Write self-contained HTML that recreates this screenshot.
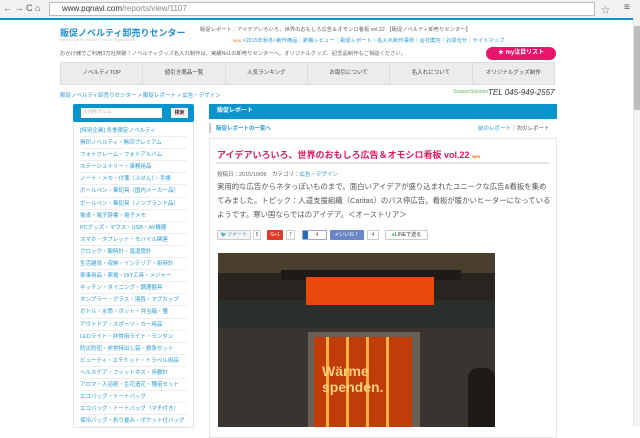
<!DOCTYPE html>
<html><head><meta charset="utf-8"><style>
*{margin:0;padding:0;box-sizing:border-box}
body{width:640px;height:427px;overflow:hidden;background:#fff;font-family:"Liberation Sans","Noto Sans CJK JP",sans-serif;position:relative;color:#555}
.a{position:absolute;white-space:nowrap}
.chrome{left:0;top:0;width:640px;height:18px;background:#f2f2f2}
.url{left:49px;top:2px;width:546px;height:14px;background:#fff;border:1px solid #bbb;font-size:8px;line-height:12px;padding-left:12px;color:#333}
.blue{left:0;top:18px;width:633px;height:2px;background:#0a94cc}
.sb{left:633px;top:18px;width:7px;height:409px;background:#f4f4f4;border-left:1px solid #e4e4e4}
.thumb{left:634px;top:26px;width:6px;height:84px;background:#bdbdbd}
.nav{left:60px;top:62px;width:495px;height:23px;background:#ececec;border:1px solid #ddd;display:flex}
.nav div{flex:1;font-size:5.5px;text-align:center;line-height:21px;border-right:1px solid #ddd;color:#444}
.side{left:73px;top:104px;width:121px}
.side .s{background:#0a94cc;height:18px;border-radius:2px;position:relative}
.side .s i{position:absolute;left:8px;top:4px;width:81px;height:10px;background:#fff;font-size:4.5px;color:#aaa;font-style:normal;padding:1px 2px}
.side ul{list-style:none;border:1px solid #e6e6e6;border-top:none;padding:3px 6px 0}
.side li{font-size:5.5px;color:#2a9ad9;height:12.1px;line-height:12px;border-bottom:1px solid #eee;overflow:hidden;white-space:nowrap}
.mh{left:209px;top:104px;width:348px;height:15px;background:#0a94cc;color:#fff;font-size:6px;font-weight:bold;line-height:15px;padding-left:8px}
.box{left:209px;top:138px;width:348px;height:300px;border:1px solid #e8e8e8}
.ttl{left:217px;top:148px;font-size:9px;color:#e5195e;font-weight:bold}
.p{left:217px;top:180px;font-size:7.4px;line-height:14.2px;color:#555;white-space:normal;width:335px}
.sh{top:230px;height:10px;font-size:5px;line-height:9px;border:1px solid #ccc;border-radius:1px;text-align:center}
</style></head><body>
<div class="a chrome"></div>
<div class="a" style="left:3px;top:3px;font-size:9px;color:#555">← → C ⌂</div>
<div class="a url">www.pqnavi.com<span style="color:#888">/reports/view/1107</span></div>
<div class="a" style="left:601px;top:3px;font-size:9px;color:#888">☆</div>
<div class="a" style="left:624px;top:2px;font-size:10px;color:#555">≡</div>
<div class="a blue"></div>
<div class="a sb"></div><div class="a thumb"></div>

<div class="a" style="left:60px;top:26px;font-size:9px;font-weight:bold;color:#1a8fd6">販促ノベルティ卸売りセンター</div>
<div class="a" style="left:60px;top:38px;font-size:3.5px;color:#ccc">Novelty SalesPromotion Premium OriginalGoods</div>
<div class="a" style="left:200px;top:25px;font-size:5.3px;color:#666">販促レポート：アイデアいろいろ、世界のおもしろ広告＆オモシロ看板 vol.22 【販促ノベルティ卸売りセンター】</div>
<div class="a" style="left:233px;top:36px;font-size:5.3px;color:#2a9ad9"><span style="color:#f60;font-size:3.5px">NEW</span> &lt;2015年秋冬&gt;新作商品｜新着レビュー｜販促レポート｜名入れ制作事例｜会社案内｜お問合せ｜サイトマップ</div>
<div class="a" style="left:60px;top:49px;font-size:5.3px;color:#666">おかげ様でご利用3万社突破！ノベルティグッズ名入れ制作は、実績No1の卸売りセンターへ。オリジナルグッズ、記念品制作もご相談ください。</div>
<div class="a" style="left:486px;top:47px;width:70px;height:13px;background:#e8156a;border-radius:7px;color:#fff;font-size:6px;font-weight:bold;text-align:center;line-height:13px">★ my注目リスト</div>
<div class="a nav"><div>ノベルティTOP</div><div>値引き商品一覧</div><div>人気ランキング</div><div>お取引について</div><div>名入れについて</div><div style="border:none">オリジナルグッズ制作</div></div>
<div class="a" style="left:60px;top:91px;font-size:5.5px;color:#2a9ad9">販促ノベルティ卸売りセンター &gt; 販促レポート &gt; 広告・デザイン</div>
<div class="a" style="left:453px;top:89px;font-size:5px;color:#6b6;font-style:italic">SeasonSolution</div>
<div class="a" style="left:488px;top:88px;font-size:8px;font-style:italic;color:#333">TEL 045-949-2557</div>

<div class="a side"><div class="s"><i>入力例:デニム</i><span style="position:absolute;left:98px;top:4px;width:17px;height:10px;background:#f4f4f4;font-size:5px;color:#333;text-align:center;line-height:10px;font-weight:bold">検索</span></div>
<ul>
<li>[特別企画] 冬季限定ノベルティ</li><li>無印ノベルティ・無印プレミアム</li><li>フォトフレーム・フォトアルバム</li><li>ステーショナリー・事務用品</li><li>ノート・メモ・付箋（ふせん）・手帳</li><li>ボールペン・筆記具（国内メーカー品）</li><li>ボールペン・筆記具（ノンブランド品）</li><li>電卓・電子辞書・電子メモ</li><li>PCグッズ・マウス・USB・AV機器</li><li>スマホ・タブレット・モバイル関連</li><li>クロック・腕時計・温湿度計</li><li>生活雑貨・収納・インテリア・掛時計</li><li>家事用品・家電・DIY工具・メジャー</li><li>キッチン・ダイニング・調理器具</li><li>タンブラー・グラス・湯呑・マグカップ</li><li>ボトル・水筒・ポット・弁当箱・箸</li><li>アウトドア・スポーツ・カー用品</li><li>LEDライト・非常用ライト・ランタン</li><li>防災防犯・非常持出し袋・救急セット</li><li>ビューティ・エチケット・トラベル用品</li><li>ヘルスケア・フィットネス・歩数計</li><li>アロマ・入浴剤・生花造花・種苗セット</li><li>エコバッグ・トートバッグ</li><li>エコバッグ・トートバッグ（マチ付き）</li><li>保冷バッグ・折り畳み・ポケット付バッグ</li>
</ul></div>

<div class="a mh">販促レポート</div>
<div class="a" style="left:209px;top:123px;width:2px;height:10px;background:#ccc"></div>
<div class="a" style="left:216px;top:124px;font-size:5.5px;color:#2a9ad9;font-weight:bold">販促レポートの一覧へ</div>
<div class="a" style="left:478px;top:124px;font-size:5.5px;color:#2a9ad9">前のレポート<span style="color:#555">｜次のレポート</span></div>
<div class="a box"></div>
<div class="a ttl">アイデアいろいろ、世界のおもしろ広告＆オモシロ看板 vol.22 <span style="color:#f60;font-size:3.5px">NEW</span></div>
<div class="a" style="left:216px;top:162px;width:333px;height:2px;background:#e4e4e4"></div>
<div class="a" style="left:217px;top:170px;font-size:5.5px;color:#666">投稿日：2015/10/06　カテゴリ：<span style="color:#2a9ad9">広告・デザイン</span></div>
<div class="a p">実用的な広告からネタっぽいものまで。面白いアイデアが盛り込まれたユニークな広告&amp;看板を集めてみました。トピック：人道支援組織（Caritas）のバス停広告。看板が暖かいヒーターになっているようです。寒い国ならではのアイデア。＜オーストリア＞</div>
<div class="a sh" style="left:217px;width:34px;color:#3a7ab8;background:#f4f4f4">🐦ツイート</div>
<div class="a sh" style="left:253px;width:8px">5</div>
<div class="a sh" style="left:267px;width:16px;background:#dd3a2a;color:#fff;border-color:#dd3a2a">G+1</div>
<div class="a sh" style="left:286px;width:9px">7</div>
<div class="a sh" style="left:302px;width:25px;border-color:#9ac"><span style="display:inline-block;width:5px;height:8px;background:#2a68b8;float:left"></span>4</div>
<div class="a sh" style="left:330px;width:34px;background:#6a85c8;color:#fff;border-color:#6a85c8">✔いいね！</div>
<div class="a sh" style="left:367px;width:12px">4</div>
<div class="a sh" style="left:385px;width:43px;color:#333"><span style="color:#2b2">●</span>LINEで送る</div>

<div class="a" style="left:218px;top:253px;width:277px;height:174px;background:#2a2420;overflow:hidden">
<div style="position:absolute;left:0;top:0;width:277px;height:20px;background:#4a3e2e"></div>
<div style="position:absolute;left:0;top:47px;width:277px;height:28px;background:#2b2f2c"></div>
<div style="position:absolute;left:0;top:75px;width:277px;height:99px;background:#3a3430"></div>
<div style="position:absolute;left:63px;top:17px;width:180px;height:10px;background:#201a16"></div>
<div style="position:absolute;left:88px;top:24px;width:128px;height:28px;background:#e8480a"></div>
<div style="position:absolute;left:90px;top:79px;width:112px;height:95px;background:#6a6058"></div>
<div style="position:absolute;left:96px;top:84px;width:98px;height:90px;background:#c03c08"></div>
<div style="position:absolute;left:108px;top:84px;width:3px;height:90px;background:#ffb040"></div>
<div style="position:absolute;left:128px;top:84px;width:3px;height:90px;background:#ffb040"></div>
<div style="position:absolute;left:148px;top:84px;width:3px;height:90px;background:#ffb040"></div>
<div style="position:absolute;left:168px;top:84px;width:3px;height:90px;background:#ffb040"></div>
<div style="position:absolute;left:104px;top:110px;font-size:14px;font-weight:bold;color:#ffd080;line-height:16px">Wärme<br>spenden.</div>
<div style="position:absolute;left:250px;top:115px;width:27px;height:59px;background:#1e1a18;border-radius:10px 10px 0 0"></div>
</div>
</body></html>
